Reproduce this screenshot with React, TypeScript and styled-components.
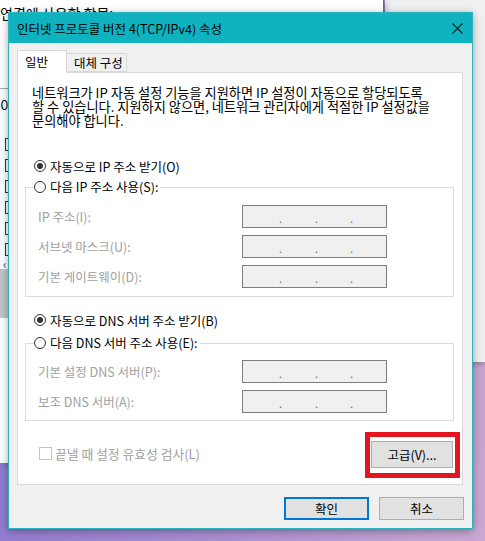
import styled, { createGlobalStyle } from 'styled-components';

const FONT = `"Noto Sans CJK KR", "Noto Sans", sans-serif`;

const GlobalStyle = createGlobalStyle`
  html, body { margin: 0; padding: 0; }
  * { box-sizing: border-box; }
`;

const Desktop = styled.div`
  position: relative;
  width: 485px;
  height: 541px;
  overflow: hidden;
  font-family: ${FONT};
  background: linear-gradient(100deg, #8a74cf 0%, #a68ccf 50%, #c9a8d1 100%);
`;

/* windows lying behind the dialog */
const SideWindow = styled.div`
  position: absolute;
  left: 385px;
  top: 0;
  width: 100px;
  height: 362px;
  background: #f0f0f0;
  box-shadow: 0 2px 5px rgba(0, 0, 0, 0.25);
`;

const BackWindow = styled.div`
  position: absolute;
  left: 0;
  top: 0;
  width: 384px;
  height: 463px;
  background: #fff;
  border-right: 1px solid #6e6e6e;
  box-shadow: 3px 2px 6px rgba(0, 0, 0, 0.2);
  padding-top: 5px;
  font-size: 14px;
  line-height: 16px;
  color: #000;
  white-space: nowrap;
`;

const BackRule = styled.div`
  margin-top: 67px;
  height: 1px;
  background: #a8a8a8;
`;

const BackText = styled.div`
  margin-top: 8px;
`;

const ItemList = styled.div`
  margin-top: 25px;
  display: flex;
  flex-direction: column;
  gap: 8px;
  padding-left: 5px;
`;

const ItemBox = styled.span<{ $checked?: boolean }>`
  display: block;
  width: 13px;
  height: 13px;
  border: 1px solid #333;
  background: ${(p) => (p.$checked ? 'radial-gradient(circle, #333 0 1.5px, transparent 2px)' : '#fff')};
`;

const ScrollArrow = styled.div`
  margin-top: 3px;
  padding-left: 3px;
  font-size: 12px;
  line-height: 10px;
  color: #555;
`;

const GrayBand = styled.div`
  height: 49px;
  background: #c4c4c4;
`;

/* the dialog */
const Dialog = styled.div`
  position: absolute;
  left: 8px;
  top: 12px;
  width: 465px;
  height: 517px;
  border: 1px solid #2ab4c0;
  background: #f0f0f0;
  box-shadow: 0 2px 8px rgba(0, 0, 0, 0.35);
  display: flex;
  flex-direction: column;
`;

const TitleBar = styled.div`
  height: 30px;
  flex: none;
  background: #0fb3bf;
  display: flex;
  align-items: center;
  justify-content: space-between;
  padding: 0 9px 0 8px;
  font-size: 12.5px;
  color: #000;
`;

const Body = styled.div`
  padding: 8px 9px 0 8px;
  display: flex;
  flex-direction: column;
`;

const TabStrip = styled.div`
  display: flex;
  align-items: flex-end;
  height: 22px;
  margin-bottom: -1px;
  position: relative;
  z-index: 1;
`;

const Tab = styled.div<{ $active?: boolean }>`
  height: ${(p) => (p.$active ? 23 : 19)}px;
  width: ${(p) => (p.$active ? 50 : 60)}px;
  margin-bottom: ${(p) => (p.$active ? 0 : 1)}px;
  background: ${(p) => (p.$active ? '#fff' : '#f0f0f0')};
  border: 1px solid #d9d9d9;
  border-bottom: ${(p) => (p.$active ? 'none' : '1px solid #d9d9d9')};
  border-left: ${(p) => (p.$active ? '1px solid #d9d9d9' : 'none')};
  font-size: 12.5px;
  line-height: ${(p) => (p.$active ? 21 : 17)}px;
  padding-left: 7px;
  color: #000;
`;

const Panel = styled.div`
  height: 413px;
  background: #fff;
  border: 1px solid #d9d9d9;
  padding: 13px 8px 0 7px;
  display: flex;
  flex-direction: column;
`;

const Intro = styled.div`
  margin: 0 0 0 7px;
  font-size: 13.2px;
  color: #000;
  white-space: nowrap;
`;

const IntroLine = styled.div`
  height: 14px;
  line-height: 14px;
`;

const RadioRow = styled.label<{ $top: number }>`
  display: flex;
  align-items: center;
  height: 20px;
  margin: ${(p) => p.$top}px 0 0 9px;
  font-size: 12.5px;
  color: #000;
`;

const LegendRow = styled.label`
  display: flex;
  align-items: center;
  height: 20px;
  font-size: 12.5px;
  color: #000;
  background: #fff;
`;

const Radio = styled.span<{ $checked?: boolean }>`
  flex: none;
  width: 12px;
  height: 12px;
  border-radius: 50%;
  border: 1px solid #333;
  background: #fff;
  display: inline-flex;
  align-items: center;
  justify-content: center;
  margin-right: 4px;
  &::after {
    content: '';
    width: 6px;
    height: 6px;
    border-radius: 50%;
    background: ${(p) => (p.$checked ? '#333' : 'transparent')};
  }
`;

const Group = styled.fieldset<{ $top: number; $pad: number }>`
  margin: ${(p) => p.$top}px 0 0 0;
  border: 1px solid #dcdcdc;
  padding: ${(p) => p.$pad}px 0 ${(p) => p.$pad}px 0;
  min-width: 0;
  display: flex;
  flex-direction: column;
  gap: 7px;
`;

const GroupLegend = styled.legend`
  margin-left: 8px;
  padding: 0 2px 0 0;
  line-height: 20px;
`;

const FieldRow = styled.div`
  display: flex;
  align-items: center;
  height: 23px;
  padding-left: 12px;
`;

const FieldLabel = styled.span`
  width: 204px;
  font-size: 12.5px;
  color: #a0a0a0;
`;

const IpBox = styled.div`
  width: 145px;
  height: 23px;
  border: 1px solid #7d7d7d;
  background: #f0f0f0;
  display: grid;
  grid-template-columns: 39px 36px 35px 1fr;
`;

const IpCell = styled.span`
  display: flex;
  justify-content: flex-end;
  align-items: center;
  padding-top: 3px;
  font-size: 11px;
  color: #6a6a6a;
`;

const PanelFooter = styled.div`
  margin-top: 20px;
  height: 27px;
  display: flex;
  align-items: center;
  justify-content: space-between;
  padding: 0 1px 0 14px;
`;

const CheckRow = styled.label`
  display: flex;
  align-items: center;
  margin-bottom: 3px;
  font-size: 12.8px;
  color: #a0a0a0;
`;

const CheckBox = styled.span`
  width: 13px;
  height: 13px;
  border: 1px solid #c4c4c4;
  background: #fff;
  margin-right: 3px;
`;

const Marked = styled.div`
  position: relative;
  &::after {
    content: '';
    position: absolute;
    left: -6px;
    right: -7px;
    top: -9px;
    bottom: -10px;
    border: 5px solid #e3161f;
    pointer-events: none;
  }
`;

const Button = styled.button<{ $w: number; $h: number; $default?: boolean }>`
  width: ${(p) => p.$w}px;
  height: ${(p) => p.$h}px;
  background: #e1e1e1;
  border: ${(p) => (p.$default ? '2px solid #0078d7' : '1px solid #adadad')};
  font-family: ${FONT};
  font-size: 12.5px;
  color: #000;
  padding: 0;
  display: flex;
  align-items: center;
  justify-content: center;
`;

const DialogFooter = styled.div`
  margin-top: 12px;
  display: flex;
  justify-content: flex-end;
  gap: 10px;
  margin-right: -1px;
`;

const IpField = () => (
  <IpBox>
    <IpCell>.</IpCell>
    <IpCell>.</IpCell>
    <IpCell>.</IpCell>
    <IpCell />
  </IpBox>
);

const Field = ({ label }: { label: string }) => (
  <FieldRow>
    <FieldLabel>{label}</FieldLabel>
    <IpField />
  </FieldRow>
);

const CloseIcon = () => (
  <svg width="11" height="11" viewBox="0 0 11 11">
    <path d="M0.5 0.5 L10.5 10.5 M10.5 0.5 L0.5 10.5" stroke="#1d1d1d" strokeWidth="1.1" fill="none" />
  </svg>
);

export default function App() {
  return (
    <Desktop>
      <GlobalStyle />
      <SideWindow />
      <BackWindow>
        <div>연결에 사용할 항목:</div>
        <BackRule />
        <BackText>이</BackText>
        <ItemList>
          {[false, false, false, true, true, false].map((c, i) => (
            <ItemBox key={i} $checked={c} />
          ))}
        </ItemList>
        <ScrollArrow>‹</ScrollArrow>
        <GrayBand />
      </BackWindow>

      <Dialog>
        <TitleBar>
          <span>인터넷 프로토콜 버전 4(TCP/IPv4) 속성</span>
          <CloseIcon />
        </TitleBar>
        <Body>
          <TabStrip>
            <Tab $active>일반</Tab>
            <Tab>대체 구성</Tab>
          </TabStrip>
          <Panel>
            <Intro>
              <IntroLine>네트워크가 IP 자동 설정 기능을 지원하면 IP 설정이 자동으로 할당되도록</IntroLine>
              <IntroLine>할 수 있습니다. 지원하지 않으면, 네트워크 관리자에게 적절한 IP 설정값을</IntroLine>
              <IntroLine>문의해야 합니다.</IntroLine>
            </Intro>

            <RadioRow $top={28}>
              <Radio $checked />
              자동으로 IP 주소 받기(O)
            </RadioRow>
            <Group $top={1} $pad={8}>
              <GroupLegend>
                <LegendRow>
                  <Radio />
                  다음 IP 주소 사용(S):
                </LegendRow>
              </GroupLegend>
              <Field label="IP 주소(I):" />
              <Field label="서브넷 마스크(U):" />
              <Field label="기본 게이트웨이(D):" />
            </Group>

            <RadioRow $top={13}>
              <Radio $checked />
              자동으로 DNS 서버 주소 받기(B)
            </RadioRow>
            <Group $top={3} $pad={7}>
              <GroupLegend>
                <LegendRow>
                  <Radio />
                  다음 DNS 서버 주소 사용(E):
                </LegendRow>
              </GroupLegend>
              <Field label="기본 설정 DNS 서버(P):" />
              <Field label="보조 DNS 서버(A):" />
            </Group>

            <PanelFooter>
              <CheckRow>
                <CheckBox />
                끝낼 때 설정 유효성 검사(L)
              </CheckRow>
              <Marked>
                <Button $w={82} $h={27}>고급(V)...</Button>
              </Marked>
            </PanelFooter>
          </Panel>
          <DialogFooter>
            <Button $w={85} $h={23} $default>확인</Button>
            <Button $w={85} $h={23}>취소</Button>
          </DialogFooter>
        </Body>
      </Dialog>
    </Desktop>
  );
}
